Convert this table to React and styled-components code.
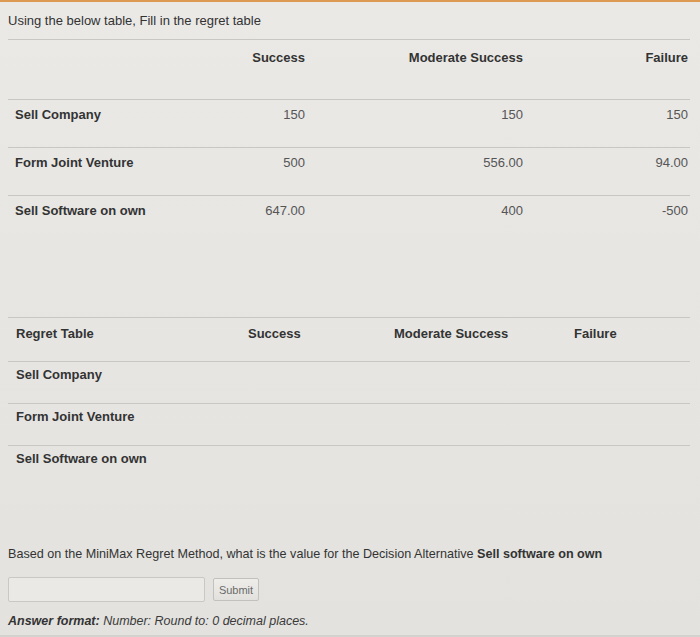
import React from 'react'
import styled, { createGlobalStyle } from 'styled-components'

const textColor = '#333333'
const valueColor = '#555555'
const lineColor = '#c8c7c3'

const GlobalStyle = createGlobalStyle`
  html, body {
    margin: 0;
    padding: 0;
    background: #e7e6e3;
  }
  body {
    font-family: 'Liberation Sans', Arial, sans-serif;
    color: ${textColor};
  }
`

const Page = styled.div`
  width: 700px;
  height: 637px;
  box-sizing: border-box;
  overflow: hidden;
  padding: 0 10px 0 8px;
  background: linear-gradient(180deg, #eae9e6 0%, #e6e5e2 55%, #e3e2df 100%);
  border-top: 2px solid #dd9a52;
  border-bottom: 2px solid #d3d2cf;
`

const Title = styled.p`
  margin: 11px 0 10px 0;
  font-size: 13px;
  line-height: 16px;
  color: ${textColor};
`

const Table = styled.div`
  margin-top: 0;
`

const Row = styled.div`
  display: grid;
  grid-template-columns: ${({ cols }) => cols};
  height: ${({ h }) => h}px;
  box-sizing: border-box;
  border-top: 1px solid ${lineColor};
  padding-top: ${({ pt }) => pt}px;
`

const Cell = styled.div`
  font-size: 13px;
  line-height: 16px;
  text-align: ${({ align }) => align || 'left'};
  padding: 0 ${({ align }) => (align === 'right' ? '2px' : '0')} 0 ${({ pl }) => pl ?? 7}px;
  color: ${({ value }) => (value ? valueColor : textColor)};
  font-weight: ${({ value }) => (value ? 400 : 700)};
  white-space: nowrap;
`

const Question = styled.p`
  margin: 0;
  font-size: 12.6px;
  line-height: 16px;
  color: ${textColor};

  b {
    font-weight: 700;
  }
`

const AnswerLine = styled.div`
  display: flex;
  align-items: center;
  gap: 8px;
  margin-top: 15px;
`

const Input = styled.input`
  width: 197px;
  height: 25px;
  box-sizing: border-box;
  border: 1px solid #c9c8c4;
  border-radius: 2px;
  background: #eae9e6;
`

const SubmitButton = styled.button`
  width: 46px;
  height: 23px;
  box-sizing: border-box;
  padding: 0;
  font-family: 'Liberation Sans', Arial, sans-serif;
  font-size: 11px;
  color: #6a6a6a;
  border: 1px solid #c2c1bd;
  border-radius: 2px;
  background: linear-gradient(180deg, #eeedea, #e2e1de);
`

const Format = styled.p`
  margin: 11px 0 0 0;
  font-size: 12.5px;
  line-height: 16px;
  font-style: italic;
  color: #3a3a3a;

  b {
    font-weight: 700;
    color: ${textColor};
  }
`

const payoffCols = '192px 107px 218px 165px'
const regretCols = '232px 146px 180px 124px'

const payoffs = [
  ['Sell Company', '150', '150', '150'],
  ['Form Joint Venture', '500', '556.00', '94.00'],
  ['Sell Software on own', '647.00', '400', '-500']
]

const regretRows = ['Sell Company', 'Form Joint Venture', 'Sell Software on own']

export default function App() {
  return (
    <>
      <GlobalStyle />
      <Page>
        <Title>Using the below table, Fill in the regret table</Title>

        <Table>
          <Row cols={payoffCols} h={60} pt={10}>
            <Cell />
            <Cell align="right">Success</Cell>
            <Cell align="right">Moderate Success</Cell>
            <Cell align="right">Failure</Cell>
          </Row>
          {payoffs.map(([label, a, b, c], i) => (
            <Row key={label} cols={payoffCols} h={i === 2 ? 122 : 48} pt={7}>
              <Cell>{label}</Cell>
              <Cell align="right" value="1">{a}</Cell>
              <Cell align="right" value="1">{b}</Cell>
              <Cell align="right" value="1">{c}</Cell>
            </Row>
          ))}
        </Table>

        <Table>
          <Row cols={regretCols} h={44} pt={8}>
            <Cell pl={8}>Regret Table</Cell>
            <Cell pl={8}>Success</Cell>
            <Cell pl={8}>Moderate Success</Cell>
            <Cell pl={8}>Failure</Cell>
          </Row>
          {regretRows.map((label, i) => (
            <Row key={label} cols={regretCols} h={i === 2 ? 101 : 42} pt={5}>
              <Cell pl={8}>{label}</Cell>
              <Cell />
              <Cell />
              <Cell />
            </Row>
          ))}
        </Table>

        <Question>
          Based on the MiniMax Regret Method, what is the value for the Decision Alternative{' '}
          <b>Sell software on own</b>
        </Question>
        <AnswerLine>
          <Input type="text" />
          <SubmitButton>Submit</SubmitButton>
        </AnswerLine>
        <Format>
          <b>Answer format:</b> Number: Round to: 0 decimal places.
        </Format>
      </Page>
    </>
  )
}
